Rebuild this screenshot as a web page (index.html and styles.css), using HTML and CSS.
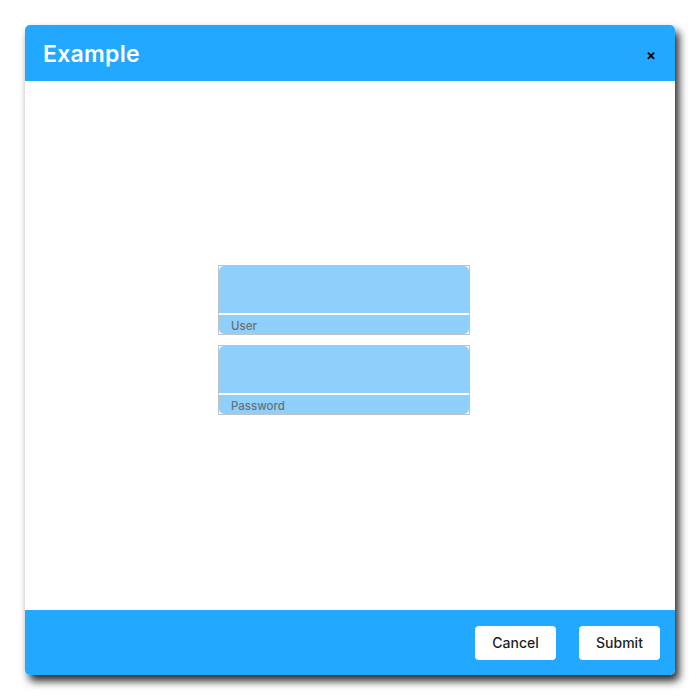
FILE: index.html
```html
<!DOCTYPE html>
<html lang="en">
<head>
  <title>Example</title>
  <meta charset="utf-8">
  <meta name="viewport" content="width=device-width, initial-scale=1">
  <link rel="stylesheet" href="styles.css">
</head>
<body>
  <div class="dialog">
    <header class="dialog-header">
      <h1 class="dialog-title">Example</h1>
      <button class="close" type="button">&times;</button>
    </header>
    <main class="dialog-body">
      <form class="login">
        <label class="field">
          <input class="field-input" type="text">
          <span class="field-label">User</span>
        </label>
        <label class="field">
          <input class="field-input" type="password">
          <span class="field-label">Password</span>
        </label>
      </form>
    </main>
    <footer class="dialog-footer">
      <button class="button" type="button">Cancel</button>
      <button class="button" type="submit">Submit</button>
    </footer>
  </div>
</body>
</html>
```

FILE: styles.css
```css
*, *::before, *::after {
  margin: 0;
  box-sizing: border-box;
}

body {
  padding: 25px;
  background-color: #FFFFFF;
  font-family: "Inter", sans-serif;
}

.dialog {
  display: flex;
  flex-direction: column;
  width: 650px;
  height: 650px;
  border-radius: 5px;
  background-color: #FFFFFF;
  box-shadow: 4px 6px 8px rgba(0, 0, 0, 0.85);
  overflow: hidden;
}

.dialog-header {
  display: flex;
  align-items: center;
  justify-content: space-between;
  height: 56px;
  padding: 2px 17px 0 18px;
  background-color: #22A8FF;
}

.dialog-title {
  color: #FFFFFF;
  font-size: 23px;
  font-weight: 600;
  letter-spacing: 0.3px;
}

.close {
  border: none;
  padding: 0 2px;
  background: none;
  color: #000000;
  font-family: inherit;
  font-size: 15px;
  font-weight: 600;
  cursor: pointer;
}

.dialog-body {
  display: flex;
  flex: 1;
  align-items: center;
  justify-content: center;
  padding: 0 12px 12px 0;
}

.login {
  display: flex;
  flex-direction: column;
  gap: 10px;
  width: 252px;
}

.field {
  display: flex;
  flex-direction: column;
  gap: 2px;
  border: 1px solid #C2C2C2;
}

.field-input {
  height: 47px;
  border: none;
  border-radius: 5px 5px 0 0;
  background-color: #8ED0FB;
  outline: none;
}

.field-label {
  height: 19px;
  padding: 4px 12px 0;
  border-radius: 0 0 5px 5px;
  background-color: #8ED0FB;
  color: #6A6F75;
  font-size: 11.5px;
  font-weight: 500;
  line-height: 14px;
}

.dialog-footer {
  display: flex;
  align-items: center;
  justify-content: flex-end;
  gap: 23px;
  height: 65px;
  padding: 0 15px;
  background-color: #22A8FF;
}

.button {
  width: 81px;
  height: 34px;
  border: none;
  border-radius: 4px;
  background-color: #FFFFFF;
  color: #1E1E1E;
  font-family: inherit;
  font-size: 14px;
  font-weight: 500;
  cursor: pointer;
}
```
